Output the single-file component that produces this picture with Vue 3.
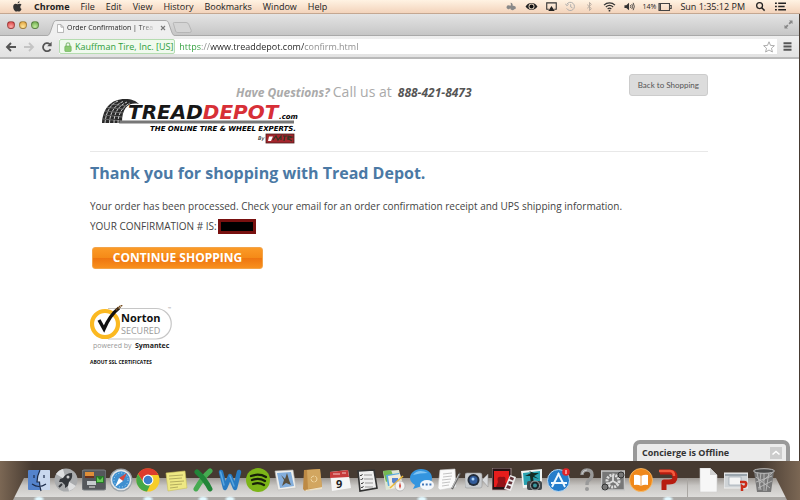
<template>
    <div class="desktop">
        <header class="menubar">
            <svg class="apple" viewBox="0 0 12 12"><path d="M8.3 0.2C8.4 1.4 7.3 2.6 6.1 2.6C6 1.400 7.100 0.400 8.300 0.200ZM10.400 8.800C9.800 10.200 9 11.500 8 11.500C7.300 11.500 7 11.100 6.200 11.100C5.400 11.100 5 11.500 4.400 11.500C3 11.500 1.300 8.600 1.300 6.300C1.300 4.200 2.600 3 4 3C4.900 3 5.500 3.500 6.200 3.500C6.800 3.500 7.500 3 8.500 3C9.300 3 10 3.400 10.400 4C8.500 5.200 8.700 7.900 10.400 8.800Z" fill="#333" /></svg>
            <nav class="menus">
                <button v-for="menu in menus" :key="menu" :class="{ app: menu === 'Chrome' }">{{ menu }}</button>
            </nav>
            <div class="tray">
                <svg class="tray-icon" viewBox="0 0 12 12"><path d="M5 2a2 2 0 0 1 2 3l2 0.500a1.700 1.700 0 1 1 0 3.500a2.500 2.500 0 0 1-4.500-1.500a2 2 0 1 1-1-2.500l2 0Z" fill="#888" /></svg>
                <svg class="tray-icon wide" viewBox="0 0 14 12"><path d="M0.500 6C3.500 1 10.500 1 13.500 6C10.500 11 3.500 11 0.500 6Z" fill="#222" /><circle cx="7" cy="6" r="3.200" fill="#e8d6c2" /><circle cx="7" cy="6" r="2.200" fill="#111" /></svg>
                <svg class="tray-icon" viewBox="0 0 12 12"><path d="M3 9H0.800V2H11.200V9H9" fill="none" stroke="#333" stroke-width="1.200" /><path d="M6 5.500L9.500 11H2.500Z" fill="#222" /></svg>
                <svg class="tray-icon" viewBox="0 0 12 12"><path d="M2 3.500A4.500 4.500 0 1 1 1.800 8M0.500 3L2 5.200L4 3.500M6.200 3.500V6.500L8.200 7.500" fill="none" stroke="#aaa" stroke-width="1" /></svg>
                <svg class="tray-icon" viewBox="0 0 12 12"><path d="M3.500 4L8 8.200L6 10.500V1.500L8 3.800L3.500 8" fill="none" stroke="#b5aaa0" stroke-width="1" /></svg>
                <svg class="tray-icon wide" viewBox="0 0 14 12"><path d="M1 4.500C4.500 1.200 9.500 1.200 13 4.500M3 6.600C5.500 4.400 8.500 4.400 11 6.600M5 8.700C6.300 7.600 7.700 7.600 9 8.700" fill="none" stroke="#333" stroke-width="1.400" /><circle cx="7" cy="10.500" r="1" fill="#333" /></svg>
                <svg class="tray-icon" viewBox="0 0 12 12"><path d="M0.500 4.500H2.500L5.500 2V10L2.500 7.500H0.500Z" fill="#333" /><path d="M7 4.500Q8 6 7 7.500M8.500 3.300Q10.300 6 8.500 8.700M10 2Q12.600 6 10 10" fill="none" stroke="#333" stroke-width="0.900" /></svg>
                <span class="battery">14%
                    <svg viewBox="0 0 14 10"><path d="M1 1.500H11.500V8.500H1ZM12 3.500H13.200V6.500H12" fill="none" stroke="#444" stroke-width="1.100" /><path d="M1.500 2H3V8H1.500Z" fill="#444" /></svg>
                </span>
                <time class="clock">Sun 1:35:12 PM</time>
                <svg class="tray-icon" viewBox="0 0 12 12"><circle cx="5" cy="5" r="3.200" fill="none" stroke="#222" stroke-width="1.400" /><path d="M7.300 7.300L10.500 10.500" stroke="#222" stroke-width="1.600" /></svg>
                <svg class="tray-icon wide" viewBox="0 0 14 12"><path d="M1 2.500H3M1 6H3M1 9.500H3M4.500 2.500H13M4.500 6H11.500M4.500 9.500H13" stroke="#222" stroke-width="1.600" /></svg>
            </div>
        </header>

        <main class="window">
            <div class="tabstrip">
                <div class="lights">
                    <button class="light red" aria-label="Close"></button>
                    <button class="light yellow" aria-label="Minimize"></button>
                    <button class="light green" aria-label="Zoom"></button>
                </div>
                <div class="tab">
                    <svg class="tab-shape" viewBox="0 0 130 16" preserveAspectRatio="none"><path d="M0 16C3 16 4 13 5 10L7 4C8 1.500 8.500 0.500 11 0.500H119C121.500 0.500 122 1.500 123 4L125 10C126 13 127 16 130 16" fill="#efefef" stroke="#a9a9a9" /></svg>
                    <svg class="tab-icon" viewBox="0 0 8 10"><path d="M0.500 0.500H4.500L7.500 3.500V9.500H0.500ZM4.500 0.500V3.500H7.500" fill="#fff" stroke="#999" stroke-width="0.800" /></svg>
                    <span class="tab-title">Order Confirmation | Trea</span>
                    <button class="tab-close" aria-label="Close tab"><svg viewBox="0 0 6 6"><path d="M1 1L5 5M5 1L1 5" stroke="#777" stroke-width="1.100" /></svg></button>
                </div>
                <button class="new-tab" aria-label="New tab">
                    <svg viewBox="0 0 22 12"><path d="M1 1.500Q1 0.500 2 0.500H15Q17 0.500 18 3L20.500 9Q21 11.500 19 11.500H6Q4 11.500 3.500 10Z" fill="#d4d4d4" stroke="#b2b2b2" /></svg>
                </button>
                <button class="fullscreen" aria-label="Full screen">
                    <svg viewBox="0 0 10 10"><path d="M5.500 0.500H9.500V4.500L8.200 3.200L6.300 5L5 3.700L6.800 1.800ZM0.500 5.500V9.500H4.500L3.200 8.200L5 6.300L3.700 5L1.800 6.800Z" fill="#888" /></svg>
                </button>
            </div>

            <div class="toolbar">
                <button class="tool" aria-label="Back"><svg viewBox="0 0 12 12"><path d="M11 6H2.500M6 2L2 6L6 10" fill="none" stroke="#555" stroke-width="1.900" /></svg></button>
                <button class="tool" aria-label="Forward"><svg viewBox="0 0 12 12"><path d="M1 6H9.500M6 2L10 6L6 10" fill="none" stroke="#c4c4c4" stroke-width="1.800" /></svg></button>
                <button class="tool" aria-label="Reload"><svg viewBox="0 0 12 12"><path d="M9.500 8.200A4 4 0 1 1 8.700 3.200" fill="none" stroke="#555" stroke-width="1.800" /><path d="M10.600 0.800V5.200H6.200Z" fill="#555" /></svg></button>
                <div class="omnibox">
                    <label class="identity" for="url">
                        <svg viewBox="0 0 8 11"><path d="M2 5V3Q2 1 4 1T6 3V5" fill="none" stroke="#8fc283" stroke-width="1.300" /><rect x="0.500" y="4.500" width="7" height="6" rx="0.800" fill="#8ccb73" stroke="#68ac55" stroke-width="0.700" /></svg>
                        Kauffman Tire, Inc. [US]
                    </label>
                    <input id="url" v-model="url" class="url" type="text" spellcheck="false" />
                    <button class="star" aria-label="Bookmark this page"><svg viewBox="0 0 12 12"><path d="M6 0.800L7.500 4.400L11.400 4.700L8.500 7.200L9.400 11L6 9L2.600 11L3.500 7.200L0.600 4.700L4.500 4.400Z" fill="#fff" stroke="#999" stroke-width="0.800" /></svg></button>
                </div>
                <button class="burger" aria-label="Menu"><svg viewBox="0 0 9 9"><path d="M0.500 1.200H8.500M0.500 4.500H8.500M0.500 7.800H8.500" stroke="#555" stroke-width="1.900" /></svg></button>
            </div>

            <div class="page">
                <header class="site-header">
                    <div class="brand">
                        <p class="phone"><em>Have Questions?</em> <span>Call us at</span> <strong>888-421-8473</strong></p>
                        <svg class="logo" viewBox="0 0 198 46" role="img" aria-label="Tread Depot">
                            <path d="M0 25C1 10 9 1 23 1C30 1 34 3 37 6C27 4 20 9 20 25Z" fill="#292929" />
                            <path d="M3 25C4 13 9 6 16 3M7.500 25C8 14 13 7 21 3.500M12 25C12 15 16 8 25 4M16 25C16 17 19 10 28 5" fill="none" stroke="#ddd" stroke-width="0.900" stroke-dasharray="3 1" />
                            <path d="M1 21L20 23M1.500 17L20 19M3 13L21 15M5 9.500L22 11M9 6L24 8" stroke="#aaa" stroke-width="0.500" />
                            <path d="M18 22.500H192V25.500H17Z" fill="#777" />
                            <text x="26" y="21" class="logo-name"><tspan fill="#171717">TREAD</tspan><tspan fill="#d72f37">DEPOT</tspan></text>
                            <text x="177" y="21" class="logo-com">.com</text>
                            <text x="48" y="33" class="logo-tag">THE ONLINE TIRE &amp; WHEEL EXPERTS.</text>
                            <text x="156" y="42" class="logo-by">By</text>
                            <rect x="164" y="36" width="28" height="9" fill="#a4252c" stroke="#4c1c1c" stroke-width="0.800" />
                            <path d="M167 38.500H171L169 43H166Z" fill="#fff" />
                            <path d="M171 42L174 38L176 42L179 38V42M181 38H185M183 38L182 43M186 42V38L190 39L186 40.500L190 43" fill="none" stroke="#332" stroke-width="1.200" />
                        </svg>
                    </div>
                    <button class="back">Back to Shopping</button>
                </header>

                <h1>Thank you for shopping with Tread Depot.</h1>
                <p class="message">Your order has been processed. Check your email for an order confirmation receipt and UPS shipping information.</p>
                <p class="message number">YOUR CONFIRMATION # IS: <span class="redacted"></span></p>
                <button class="continue">CONTINUE SHOPPING</button>

                <section class="norton">
                    <svg viewBox="0 0 84 48" role="img" aria-label="Norton Secured, powered by Symantec">
                        <path d="M18 3.500H66A15 15 0 0 1 66 34H18" fill="#fff" stroke="#c6c6c6" stroke-width="1.200" />
                        <circle cx="15" cy="19" r="13" fill="#fff" stroke="#fbb921" stroke-width="4.200" />
                        <path d="M9 15L14 24Q20 10 29 3" fill="none" stroke="#111" stroke-width="3.400" />
                        <path d="M26 5L32 0" stroke="#744b1c" stroke-width="2.200" stroke-dasharray="1.500 0.600" />
                        <text x="31" y="17" class="norton-name">Norton</text>
                        <text x="31" y="29" class="norton-secured">SECURED</text>
                        <text x="3" y="43" class="norton-by">powered by</text>
                        <text x="45" y="43" class="norton-by dark">Symantec</text>
                        <text x="78" y="5" class="norton-tm">™</text>
                    </svg>
                    <a href="#ssl">ABOUT SSL CERTIFICATES</a>
                </section>

                <aside class="concierge">
                    <span>Concierge is Offline</span>
                    <button aria-label="Expand"><svg viewBox="0 0 12 12"><path d="M2.500 7.500L6 4.500L9.500 7.500" fill="none" stroke="#fff" stroke-width="1.600" /></svg></button>
                </aside>
            </div>
        </main>

        <footer class="dock">
            <div class="apps">
                <svg class="running" viewBox="0 0 24 24"><rect x="1" y="2" width="22" height="20" rx="1" fill="#5483cc" /><path d="M13 2H22Q23 2 23 3V22H13.500Q12.500 18 12.500 14H10Q10.500 7 13 2Z" fill="#c9d8ee" /><path d="M13 2Q10 8 10 14H12.500Q12.500 18 14 23M5 16Q12 21 19 16M7 7V10M17 7V10" fill="none" stroke="#1c2b49" stroke-width="1.200" /></svg>
                <svg viewBox="0 0 24 24"><circle cx="12" cy="12" r="11.500" fill="#a9abad" /><path d="M12 12L2 6A12 12 0 0 1 9 1ZM12 12L22 18A12 12 0 0 1 15 23Z" fill="#dedfe0" /><path d="M18 5Q12 5 9 10L6 11L5 14L8 14L11 17L11 20L14 18L15 14Q19 11 18 5Z" fill="#34373b" /><circle cx="14" cy="9" r="1.500" fill="#ccc" /><path d="M5 19L8 16" stroke="#34373b" stroke-width="2" /></svg>
                <svg viewBox="0 0 24 24"><rect x="0" y="2" width="24" height="20" rx="2" fill="#55585c" stroke="#7d8084" /><rect x="3" y="4" width="9" height="6" fill="#df8e38" /><path d="M3 8H12V10H3Z" fill="#69311d" /><rect x="14" y="8" width="8" height="7" fill="#28782b" /><path d="M15 9L18 12L21 9V14H15Z" fill="#66ca57" /><rect x="5" y="13" width="9" height="4" fill="#c7cccf" /><path d="M7 19H13" stroke="#bbb" stroke-width="1.500" /></svg>
                <svg viewBox="0 0 24 24"><circle cx="12" cy="12" r="11.500" fill="#9ca3a9" /><circle cx="12" cy="12" r="10.300" fill="#e4e8eb" /><circle cx="12" cy="12" r="8.800" fill="#3e8fd0" /><circle cx="12" cy="12" r="7" fill="none" stroke="#bbdcf4" stroke-dasharray="1 2" /><path d="M18 5L14 13L10 10Z" fill="#d8483d" /><path d="M6 19L10 10L14 13Z" fill="#fff" /></svg>
                <svg class="running" viewBox="0 0 24 24"><circle cx="12" cy="12" r="11.500" fill="#f6cd28" /><path d="M2 6A11.500 11.500 0 0 1 22.500 7H12Q7 8 7.500 14Z" fill="#dc3c2d" /><path d="M2 6L7.500 14.500Q10 18 14 17L11 23.500A11.500 11.500 0 0 1 2 6Z" fill="#45a846" /><circle cx="12" cy="12" r="5.400" fill="#fff" /><circle cx="12" cy="12" r="4.300" fill="#3c7fca" /></svg>
                <svg viewBox="0 0 24 24"><path d="M2 5L21 3L23 20L4 23Z" fill="#eee884" stroke="#c9c05c" stroke-width="0.600" /><path d="M5 8L19 7M5 11L18 10M6 14L20 13M6 17L18 16M6 20L14 19" stroke="#a49d55" stroke-width="0.800" /></svg>
                <svg class="running" viewBox="0 0 24 24"><path d="M19 3Q12 9 5 21" fill="none" stroke="#46ab51" stroke-width="5" stroke-linecap="round" /><path d="M6 4Q14 11 19 21" fill="none" stroke="#218538" stroke-width="5" stroke-linecap="round" /></svg>
                <svg class="running" viewBox="0 0 24 24"><path d="M3 4L7 20L12 8L17 20L21 4" fill="none" stroke="#287bc2" stroke-width="4.500" stroke-linejoin="round" stroke-linecap="round" /><path d="M2.500 4L6 17M12 8L16 18" stroke="#59a6e0" stroke-width="1.500" stroke-linecap="round" /></svg>
                <svg viewBox="0 0 24 24"><circle cx="12" cy="12" r="12" fill="#7cb518" /><path d="M5 8Q13 5 20 9M6 12Q13 9.500 19 13M7 16Q13 14 18 17" fill="none" stroke="#162009" stroke-width="2.300" stroke-linecap="round" /></svg>
                <svg viewBox="0 0 24 24"><path d="M2 3L20 2L23 20L5 22Z" fill="#f0f0ec" stroke="#bbb" stroke-width="0.600" /><path d="M4 5L18 4L21 18L7 20Z" fill="#83aedc" /><path d="M8 7L12 11L14 5L16 12L18 17L13 15L9 18L11 12Z" fill="#59503f" /></svg>
                <svg viewBox="0 0 24 24"><path d="M4 2L20 1L22 20L5 23L3 21Z" fill="#bd8a45" /><path d="M7 2L20 1L22 19L8 21Z" fill="#d2a660" /><path d="M5 22L22 19V21L6 23Z" fill="#eee2c7" /><circle cx="14" cy="11" r="3" fill="none" stroke="#f0d6a1" stroke-dasharray="4 1" /></svg>
                <svg viewBox="0 0 24 24"><path d="M2 4L20 2L23 20L4 23Z" fill="#f5f5f5" /><path d="M2 4L20 2L21 9L2 10Z" fill="#c63a3b" /><path d="M5 6H12M14 5H18" stroke="#f1c5c5" /><text x="8" y="20" class="cal-day">9</text></svg>
                <svg viewBox="0 0 24 24"><path d="M3 3L19 2L22 20L5 23Z" fill="#efefef" stroke="#333" stroke-width="1.600" /><path d="M9 7H17M9 11H18M10 15H18M10 19H18" stroke="#999" /><path d="M5 7L6 8L7.500 6M5.500 11L6.500 12L8 10M6 15L7 16L8.500 14M6 19L7 20L8.500 18" fill="none" stroke="#333" stroke-width="0.900" /></svg>
                <svg viewBox="0 0 24 24"><path d="M1 3L17 2L21 19L4 22Z" fill="#dde6d3" /><path d="M1 3L9 2L12 10L4 14Z" fill="#74b854" /><path d="M4 7L17 5L20 16L6 18Z" fill="#5aaae0" /><path d="M6 8L18 6L21 18L8 21Z" fill="#f1ecda" /><path d="M10 10H16V14L13 17L10 14Z" fill="#5884cf" /><path d="M8 20L21 8" stroke="#edb937" stroke-width="1.500" /><circle cx="18" cy="18" r="5" fill="#f4f4f4" stroke="#aaa" stroke-width="0.700" /><path d="M18 14L19 18L18 21L17 18Z" fill="#d34437" /></svg>
                <svg class="running" viewBox="0 0 24 24"><path d="M11 1C18 1 22 5 22 10S18 18 12 18L3 21L5 17Q0 14 0 10C0 5 5 1 11 1Z" fill="#3495df" /><path d="M3 7Q8 0 18 5Q10 5 3 7Z" fill="#80c4f3" /><ellipse cx="17" cy="17" rx="7" ry="5" fill="#f5f8fc" /><path d="M12 16.500H22" stroke="#4578b8" stroke-width="2" stroke-dasharray="2 1.700" /></svg>
                <svg viewBox="0 0 24 24"><path d="M3 2L18 1L19 19L3 22L1 20Z" fill="#fafafa" stroke="#ccc" stroke-width="0.600" /><path d="M6 6L15 5M6 9L15 8M5 12L14 11M5 15L13 14M5 18L12 17" stroke="#aaa" stroke-width="0.700" /><path d="M23 5L15 21" stroke="#666" stroke-width="2" /><path d="M22 6L15 20" stroke="#ddd" stroke-width="0.800" /></svg>
                <svg viewBox="0 0 24 24"><rect x="0" y="5" width="17" height="15" rx="2" fill="#c9cccf" stroke="#999" stroke-width="0.600" /><path d="M17 12L23 6V19Z" fill="#d9dbdd" stroke="#999" stroke-width="0.600" /><circle cx="8.500" cy="12" r="6" fill="#222c3b" /><circle cx="8.500" cy="12" r="4" fill="#315b9b" /><circle cx="8" cy="11" r="1.500" fill="#a9d4fa" /></svg>
                <svg viewBox="0 0 24 24"><rect x="0" y="0" width="19" height="22" fill="#261214" stroke="#b9a9a7" stroke-width="0.800" /><rect x="2" y="3" width="15" height="16" fill="#e71d1c" /><path d="M4 19L6 14Q4 8 10 9Q15 8 13 14L16 19Z" fill="#921116" /><path d="M18 7L24 9L19 23L12 21Z" fill="#eee" /><path d="M18.500 8.500L22 10L21 12.500L17.500 11ZM17 13L20.500 14L19.500 16.500L16 15.500ZM15.500 17L19 18.500L18 21L14 20Z" fill="#613137" /></svg>
                <svg viewBox="0 0 24 24"><path d="M2 3L23 1V18L4 20Z" fill="#f0f4f2" /><path d="M4 5L21 3V16L5 17Z" fill="#27a1b0" /><path d="M12 16L11 8L6 8L12 5L10 3L15 5L20 5L15 8L20 11L14 9L15 16Z" fill="#142c24" /><rect x="8" y="13" width="15" height="9" rx="2" fill="#444a4d" /><circle cx="16" cy="17.500" r="4.500" fill="#1b2529" stroke="#aaa" /><circle cx="16" cy="17.500" r="2" fill="#39949b" /></svg>
                <svg viewBox="0 0 24 24"><circle cx="11.500" cy="12.500" r="11" fill="#257dcb" stroke="#bcd9f0" /><path d="M12 5L5 19M11 5L18 19M4 15H20" fill="none" stroke="#eef8ff" stroke-width="1.900" /><circle cx="19" cy="4" r="3.800" fill="#e32428" /><path d="M19 2V6" stroke="#fff" /></svg>
                <svg viewBox="0 0 24 24"><path d="M8 7Q8 2 13 2T18 7Q18 10 14 13Q13 14 13 17" fill="none" stroke="#999" stroke-width="3.400" /><path d="M8 6Q9 2 13 2" fill="none" stroke="#ccc" /><circle cx="13" cy="21" r="2" fill="#999" /></svg>
                <svg viewBox="0 0 24 24"><rect x="0.500" y="3" width="23" height="19" fill="#777" stroke="#c7c7c7" stroke-width="1.500" /><circle cx="12" cy="13" r="6" fill="none" stroke="#ddd" stroke-width="3" stroke-dasharray="2 1" /><path d="M12 13V7M12 13L7 16M12 13L17 16" stroke="#ddd" stroke-width="1.800" /><circle cx="4" cy="19" r="3" fill="none" stroke="#333" /><circle cx="20" cy="7" r="3" fill="none" stroke="#333" /></svg>
                <svg viewBox="0 0 24 24"><circle cx="12" cy="12" r="11.500" fill="#ef881b" stroke="#f9bf6c" stroke-width="0.800" /><path d="M12 8Q8 6 5 7V17Q9 16 12 18Q15 16 19 17V7Q16 6 12 8Z" fill="#fff" /><path d="M12 8V18" stroke="#ef881b" stroke-width="0.800" /></svg>
                <svg class="running" viewBox="0 0 24 24"><path d="M4 4H14Q19 4 19 9T13 14H8V22" fill="none" stroke="#b71c10" stroke-width="5" stroke-linejoin="round" /><path d="M3 3H14Q18 3 18 8" fill="none" stroke="#f25a3d" stroke-width="2.500" /></svg>
            </div>
            <span class="divider"></span>
            <div class="files">
                <svg viewBox="0 0 24 24"><path d="M4 0H14L21 7V24H4Z" fill="#f7f7f7" stroke="#ccc" stroke-width="0.600" /><path d="M14 0V7H21Z" fill="#d1d1d1" /></svg>
                <svg viewBox="0 0 24 24"><rect x="0" y="5" width="24" height="15" fill="#cfd3d6" stroke="#f1f1f1" /><path d="M1 6H23V8H1Z" fill="#9aa4ac" /><rect x="5" y="9" width="12" height="8" fill="#f4f4f4" stroke="#8a98a5" stroke-width="0.600" /><path d="M16 14H20Q23 14 22 17T18 18V23" fill="none" stroke="#cc2c18" stroke-width="2.500" /></svg>
                <svg viewBox="0 0 24 24"><path d="M2 3H22L19 24H5Z" fill="#777" /><path d="M5 5L9 22M9 4L7 22M12 4V23M17 4L14 23M20 5L7 16M4 9L18 20M4 14L20 8M6 20L20 13" stroke="#bbb" stroke-width="0.900" /><ellipse cx="12" cy="3" rx="10.500" ry="2.300" fill="#494949" stroke="#ccc" stroke-width="0.900" /></svg>
            </div>
        </footer>
    </div>
</template>

<script setup>
import { ref } from 'vue';

const menus = ['Chrome', 'File', 'Edit', 'View', 'History', 'Bookmarks', 'Window', 'Help'];
const url = ref('https://www.treaddepot.com/confirm.html');
</script>

<style>
body {
    margin: 0;
    background: #463a31;
}
</style>

<style scoped>
.desktop {
    min-height: 100vh;
    display: flex;
    flex-direction: column;
    font-family: "Open Sans", "Noto Sans", sans-serif;
    color: #222;
}

svg {
    display: block;
    flex-shrink: 0;
}

button {
    padding: 0;
    border: none;
    background: none;
    color: inherit;
    font: inherit;
    cursor: pointer;
}

.menubar {
    height: 14px;
    display: flex;
    align-items: center;
    padding: 0 13px 0 12px;
    box-sizing: border-box;
    border-bottom: 1px solid #c4a791;
    background: linear-gradient(#fff3e3, #f3d3bb);
    font-size: 9px;
    font-weight: 500;
    line-height: 13px;
}

.apple {
    width: 11px;
    height: 11px;
}

.menus {
    display: flex;
    gap: 11px;
    margin-left: 11px;
}

.app {
    font-weight: bold;
}

.tray {
    display: flex;
    align-items: center;
    gap: 8px;
    margin-left: auto;
}

.tray-icon {
    width: 11px;
    height: 11px;
}

.wide {
    width: 13px;
}

.battery {
    display: flex;
    align-items: center;
    gap: 2px;
    font-size: 7px;
}

.battery svg {
    width: 14px;
    height: 10px;
}

.clock {
    margin-right: 2px;
}

.window {
    flex: 1;
    display: flex;
    flex-direction: column;
    margin-right: 1px;
    background: #fff;
}

.tabstrip {
    height: 22px;
    display: flex;
    align-items: flex-end;
    box-sizing: border-box;
    padding: 0 6px 0 7px;
    border-bottom: 1px solid #a9a9a9;
    background: linear-gradient(#e4e4e4, #c6c6c6);
}

.lights {
    display: flex;
    gap: 4px;
    align-self: center;
    margin-right: 7px;
}

.light {
    width: 8px;
    height: 8px;
    box-sizing: border-box;
    border: 1px solid rgba(0, 0, 0, 0.3);
    border-radius: 50%;
}

.red {
    background: radial-gradient(circle at 50% 80%, #ffaaa6, #d73a3b);
}

.yellow {
    background: radial-gradient(circle at 50% 80%, #ffe69b, #e09e36);
}

.green {
    background: radial-gradient(circle at 50% 80%, #c3ee9d, #66a447);
}

.tab {
    position: relative;
    width: 130px;
    height: 16px;
    margin-bottom: -1px;
    display: flex;
    align-items: center;
    box-sizing: border-box;
    padding: 0 10px 0 11px;
}

.tab-shape {
    position: absolute;
    inset: 0;
    width: 100%;
    height: 100%;
}

.tab-icon {
    position: relative;
    width: 7px;
    height: 9px;
}

.tab-title {
    position: relative;
    flex: 1;
    margin: 0 4px 0 3px;
    white-space: nowrap;
    font-size: 7px;
    font-weight: 500;
    line-height: 14px;
    mask-image: linear-gradient(to right, #000 80%, transparent);
}

.tab-close {
    position: relative;
}

.tab-close svg {
    width: 6px;
    height: 6px;
}

.new-tab {
    margin: 0 0 2px -4px;
}

.new-tab svg {
    width: 21px;
    height: 11px;
}

.fullscreen {
    align-self: center;
    margin-left: auto;
}

.fullscreen svg {
    width: 9px;
    height: 9px;
}

.toolbar {
    height: 23px;
    display: flex;
    align-items: center;
    gap: 6px;
    box-sizing: border-box;
    padding: 0 7px 0 5px;
    border-bottom: 2px solid #b9b9b9;
    background: linear-gradient(#efefef, #e2e2e2);
}

.tool svg {
    width: 12px;
    height: 12px;
}

.omnibox {
    flex: 1;
    display: flex;
    align-items: center;
    height: 15px;
    background: #fff;
    font-size: 9px;
}

.identity {
    display: flex;
    align-items: center;
    gap: 3px;
    height: 13px;
    padding: 0 1px 0 4px;
    border: 1px solid #b5dcb0;
    border-radius: 2px;
    background: #f0faee;
    color: #2f9e3b;
}

.identity svg {
    width: 8px;
    height: 10px;
}

.url {
    flex: 1;
    min-width: 0;
    height: 15px;
    padding: 0;
    margin-left: 4px;
    border: none;
    outline: none;
    font: inherit;
    background: linear-gradient(to right, #2f9e3b 22px, #888 22px 32px, #222 32px 125px, #888 125px);
    background-clip: text;
    -webkit-text-fill-color: transparent;
}

.star {
    margin-right: 2px;
}

.star svg {
    width: 12px;
    height: 12px;
}

.burger svg {
    width: 9px;
    height: 9px;
}

.page {
    position: relative;
    flex: 1;
    padding: 15px 91px 0 90px;
    color: #444;
}

.site-header {
    display: flex;
    align-items: flex-start;
    justify-content: space-between;
    padding-bottom: 7px;
    border-bottom: 1px solid #e8e8e8;
}

.phone {
    display: flex;
    align-items: baseline;
    gap: 3px;
    height: 24px;
    margin: 0 0 0 146px;
    color: #aaa;
    font-size: 12px;
    line-height: 36px;
    white-space: nowrap;
}

.phone em {
    font-weight: bold;
}

.phone span {
    font-size: 14px;
}

.phone strong {
    margin-left: 3px;
    color: #555;
    font-style: italic;
}

.logo {
    width: 198px;
    height: 46px;
    margin-left: 12px;
}

.logo text {
    font-family: "DejaVu Sans", sans-serif;
    font-style: italic;
    font-weight: bold;
}

.logo .logo-name {
    font-size: 20px;
}

.logo .logo-com {
    font-size: 7px;
}

.logo .logo-tag {
    font-size: 7px;
}

.logo .logo-by {
    font-size: 5px;
    font-weight: normal;
}

.back {
    height: 22px;
    padding: 0 8px;
    border: 1px solid #ccc;
    border-radius: 3px;
    background: #dcdcdc;
    color: #555;
    font-family: Lato, "Open Sans", sans-serif;
    font-size: 8px;
}

h1 {
    margin: 9px 0 0;
    color: #4b79a5;
    font-size: 16px;
    line-height: 24px;
}

.message {
    margin: 11px 0 0;
    font-size: 10px;
    line-height: 20px;
}

.number {
    display: flex;
    align-items: center;
    gap: 1px;
    margin: 0;
}

.redacted {
    width: 32px;
    height: 9px;
    border: 3px solid #78100f;
    background: #000;
}

.continue {
    display: block;
    width: 171px;
    height: 22px;
    margin: 11px 0 0 2px;
    border: 1px solid #f3a44a;
    border-radius: 3px;
    background: linear-gradient(#fb9a26, #f58a17 50%, #ee7510 51%, #f8901d);
    color: #fff;
    font-size: 12px;
    font-weight: bold;
    line-height: 18px;
}

.norton {
    margin-top: 36px;
}

.norton svg {
    width: 84px;
    height: 48px;
}

.norton-name {
    font-size: 11px;
    font-weight: bold;
    fill: #111;
}

.norton-secured {
    font-size: 9px;
    fill: #999;
}

.norton-by {
    font-size: 7px;
    fill: #999;
}

.norton-by.dark {
    font-weight: bold;
    fill: #222;
}

.norton-tm {
    font-size: 4px;
    fill: #999;
}

.norton a {
    display: block;
    margin-top: 4px;
    color: #111;
    font-size: 5px;
    font-weight: bold;
    line-height: 10px;
    text-decoration: none;
}

.concierge {
    position: absolute;
    right: 9px;
    bottom: 0;
    width: 149px;
    height: 17px;
    display: flex;
    align-items: center;
    justify-content: space-between;
    border: 4px solid #999;
    border-bottom: none;
    border-radius: 7px 7px 0 0;
    background: #ebebeb;
    color: #333;
    font-size: 9px;
    font-weight: bold;
}

.concierge span {
    margin-left: 5px;
}

.concierge button {
    margin-right: 4px;
    background: #ccc;
}

.concierge svg {
    width: 12px;
    height: 12px;
}

.dock {
    position: relative;
    height: 39px;
    display: flex;
    align-items: flex-start;
    box-sizing: border-box;
    padding: 7px 24px 0 27px;
    background: linear-gradient(to right, #7b6754, #463a31 4%, #463a31 95%, #7b6754);
}

.dock::before {
    content: "";
    position: absolute;
    inset: 17px 13px 0;
    background: linear-gradient(#9c9792, #c9c7c4 35%, #dddcda 86%, #aaa8a5 87%);
    clip-path: polygon(11px 0, calc(100% - 11px) 0, 100% 100%, 0 100%);
}

.apps,
.files {
    position: relative;
    display: flex;
    justify-content: space-between;
}

.apps {
    flex: 1;
}

.files {
    gap: 4px;
}

.apps svg,
.files svg {
    width: 24px;
    height: 24px;
}

.apps .running {
    padding-bottom: 8px;
    background: radial-gradient(ellipse 6px 3px at 50% 31px, #e2f8ff 40%, transparent);
}

.divider {
    position: relative;
    width: 1px;
    height: 18px;
    margin: 11px 8px 0 7px;
    background: #aaa7a3;
}

.cal-day {
    font-size: 11px;
    font-weight: bold;
    fill: #222;
}
</style>
